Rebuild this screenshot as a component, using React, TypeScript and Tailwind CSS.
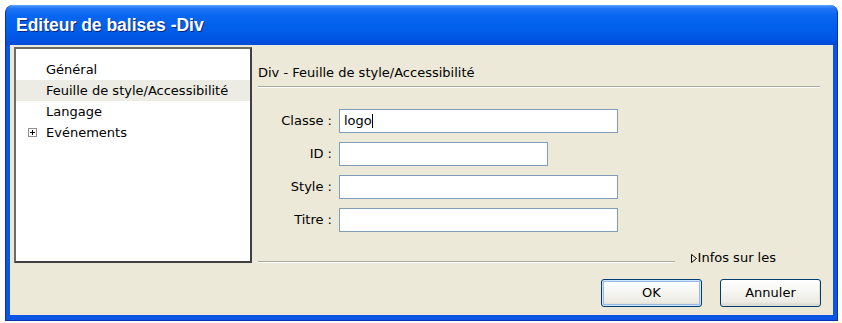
const items = [
  { label: 'Général', selected: false, expandable: false },
  { label: 'Feuille de style/Accessibilité', selected: true, expandable: false },
  { label: 'Langage', selected: false, expandable: false },
  { label: 'Evénements', selected: false, expandable: true },
]

const fields = [
  { label: 'Classe :', value: 'logo', width: 'w-[279px]', caret: true },
  { label: 'ID :', value: '', width: 'w-[209px]', caret: false },
  { label: 'Style :', value: '', width: 'w-[279px]', caret: false },
  { label: 'Titre :', value: '', width: 'w-[279px]', caret: false },
]

function PlusBox() {
  return (
    <svg width="9" height="9" viewBox="0 0 9 9" className="block">
      <rect x="0.5" y="0.5" width="8" height="8" fill="#fff" stroke="#8e8f8f" />
      <path d="M2 4.5h5M4.5 2v5" stroke="#000" strokeWidth="1" />
    </svg>
  )
}

function XpButton({ label, isDefault }: { label: string; isDefault?: boolean }) {
  return (
    <button
      type="button"
      className={`w-[101px] h-[28px] rounded-[3px] border border-[#003c74] bg-[linear-gradient(to_bottom,#ffffff_0%,#f7f7f3_40%,#ecebe4_85%,#d6d0c5_100%)] text-[13px] text-black ${
        isDefault
          ? 'shadow-[inset_0_0_0_1px_#cee7ff,inset_0_0_0_2px_#98b8ea]'
          : 'shadow-[inset_-1px_-1px_0_#e3e0d5]'
      }`}
    >
      {label}
    </button>
  )
}

export default function App() {
  return (
    <div className="w-[842px] h-[323px] bg-white pl-[5px] pt-[5px] font-['DejaVu_Sans',sans-serif] text-[13px] text-black">
      <div className="w-[833px] h-[316px] flex flex-col rounded-t-[8px] overflow-hidden bg-[#0a55e4] border border-[#0a2fb0] border-t-0">
        {/* title bar */}
        <div className="h-[40px] shrink-0 flex items-center pl-[10px] bg-[linear-gradient(to_bottom,#5aa6ff_0%,#2176f4_8%,#0a66f0_25%,#0060ec_55%,#0257e3_85%,#0049d4_100%)]">
          <span className="text-white font-['Liberation_Sans',sans-serif] font-bold text-[17.5px] [text-shadow:1px_1px_0_#0a2780]">
            Editeur de balises -Div
          </span>
        </div>

        {/* client area */}
        <div className="flex-1 mx-[4px] mb-[5px] bg-[#ece9d8] flex flex-col pt-[2px] pl-[4px]">
          <div className="flex h-[216px]">
            {/* category list */}
            <div className="w-[238px] h-full bg-white border-2 border-t-[#6e6c62] border-l-[#6e6c62] border-r-[#404040] border-b-[#404040] pt-[10px]">
              {items.map((it) => (
                <div
                  key={it.label}
                  className={`h-[21px] flex items-center ${it.selected ? 'bg-[#ecebe4]' : ''}`}
                >
                  <div className="w-[30px] flex justify-end pr-[9px]">
                    {it.expandable && <PlusBox />}
                  </div>
                  <span className="whitespace-nowrap">{it.label}</span>
                </div>
              ))}
            </div>

            {/* panel */}
            <div className="flex-1 flex flex-col pl-[6px] pr-[13px]">
              <div className="pt-[18px] leading-[16px]">Div - Feuille de style/Accessibilité</div>
              <div className="mt-[5px] border-t border-[#aca899] border-b border-b-white" />

              <div className="mt-[21px] flex flex-col gap-[9px]">
                {fields.map((f) => (
                  <div key={f.label} className="flex items-center">
                    <div className="w-[81px] text-right pr-[7px] whitespace-nowrap">{f.label}</div>
                    <div
                      className={`${f.width} h-[24px] bg-white border border-[#7f9db9] flex items-center pl-[4px]`}
                    >
                      {f.value}
                      {f.caret && <span className="inline-block w-px h-[14px] bg-black" />}
                    </div>
                  </div>
                ))}
              </div>

              <div className="mt-auto flex items-end">
                <div className="flex-1 border-t border-[#aca899] border-b border-b-white" />
                <div className="ml-[16px] mr-[44px] mb-[-3px] flex items-center leading-[16px] whitespace-nowrap">
                  <svg width="6" height="9" viewBox="0 0 6 9" className="mr-[1px]">
                    <path d="M0.5 0.5L5.5 4.5L0.5 8.5Z" fill="none" stroke="#000" strokeWidth="1" />
                  </svg>
                  Infos sur les
                </div>
              </div>
            </div>
          </div>

          {/* buttons */}
          <div className="mt-[16px] flex justify-end gap-[18px] pr-[12px]">
            <XpButton label="OK" isDefault />
            <XpButton label="Annuler" />
          </div>
        </div>
      </div>
    </div>
  )
}
